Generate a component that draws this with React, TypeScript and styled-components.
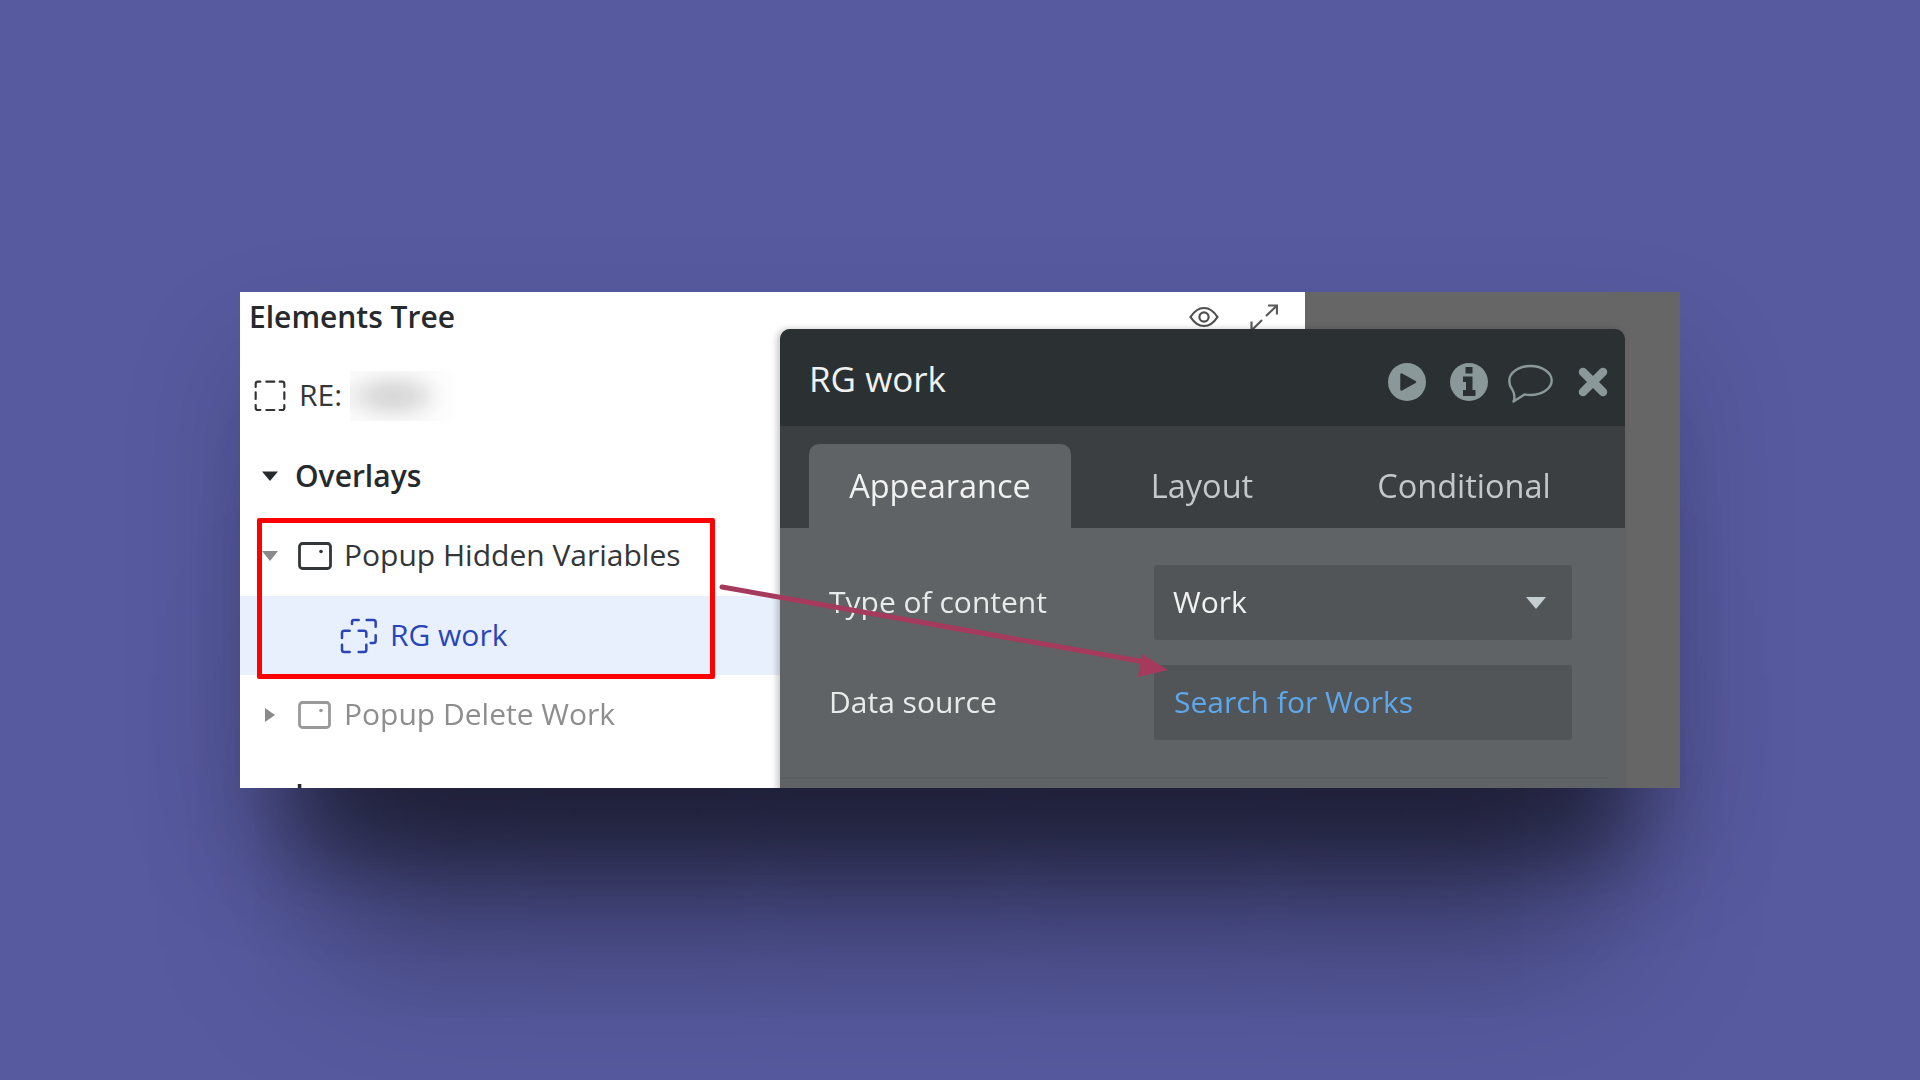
import React from "react";
import styled, { createGlobalStyle } from "styled-components";

const Global = createGlobalStyle`
  html, body { margin: 0; padding: 0; background: #575a9f; }
  body { font-family: "Open Sans", "Noto Sans", sans-serif; }
`;

const Page = styled.div`
  width: 1920px;
  height: 1080px;
  background: #575a9f;
  padding: 292px 0 0 240px;
  box-sizing: border-box;
  overflow: hidden;
`;

const Card = styled.div`
  position: relative;
  width: 1440px;
  height: 496px;
  display: flex;
  overflow: hidden;
  background: #666666;
`;

const ShadowFrame = styled.div`
  width: 1440px;
  height: 496px;
  box-shadow: 0 125px 80px -55px rgba(0, 0, 0, 0.38), 0 245px 160px -85px rgba(0, 0, 0, 0.34),
    0 60px 110px 0 rgba(0, 0, 0, 0.18);
`;

const Surface = styled.div`
  display: flex;
  width: 100%;
  height: 100%;
  filter: blur(0.55px);
`;

const TreePanel = styled.div`
  width: 1065px;
  flex: none;
  background: #ffffff;
  display: flex;
  flex-direction: column;
  color: #2a2a2a;
`;

const TitleRow = styled.div`
  height: 50px;
  flex: none;
  display: flex;
  align-items: center;
  padding: 0 27px 0 9px;
  margin-bottom: 14px;
`;

const Title = styled.div`
  font-size: 30px;
  font-weight: 600;
  color: #262a2c;
  flex: 1;
  margin-top: -2px;
`;

const Eye = styled.svg`
  width: 30px;
  height: 22px;
  margin-right: 31px;
  flex: none;
`;

const Expand = styled.svg`
  width: 28px;
  height: 28px;
  margin-top: 2px;
  flex: none;
`;

const Row = styled.div<{ $selected?: boolean; $h?: number; $gray?: boolean; $pad?: number }>`
  height: ${(p) => p.$h ?? 80}px;
  flex: none;
  display: flex;
  align-items: center;
  padding-left: ${(p) => p.$pad ?? 20}px;
  background: ${(p) => (p.$selected ? "#e8f0fd" : "transparent")};
  color: ${(p) => (p.$selected ? "#2a45b8" : p.$gray ? "#8e8e8e" : "#333638")};
  font-size: 30px;
  white-space: nowrap;
`;

const Arrow = styled.svg`
  width: 20px;
  height: 20px;
  flex: none;
`;

const SectionLabel = styled.span`
  font-weight: 600;
  margin: -2px 0 0 15px;
  font-size: 30px;
  color: #262a2c;
`;

const Label = styled.span`
  margin: -3px 0 0 12px;
`;

const BoxIcon = styled.svg`
  width: 34px;
  height: 28px;
  margin-left: 18px;
  flex: none;
`;

const DashIcon = styled.svg`
  width: 34px;
  height: 34px;
  flex: none;
`;

const GroupIcon = styled.svg`
  width: 38px;
  height: 36px;
  flex: none;
  margin-left: 80px;
`;

const Redacted = styled.div`
  width: 108px;
  height: 50px;
  margin-left: 8px;
  background: radial-gradient(ellipse 56px 28px at 40% 50%, #d8d8d8 0%, #dedede 35%, #efefef 70%, #f9f9f9 100%);
  -webkit-mask-image: linear-gradient(to right, #000 70%, transparent 100%);
  mask-image: linear-gradient(to right, #000 70%, transparent 100%);
`;

const Popup = styled.div`
  position: absolute;
  left: 540px;
  top: 37px;
  width: 845px;
  height: 500px;
  border-radius: 10px 10px 0 0;
  overflow: hidden;
  box-shadow: -3px 0 6px rgba(0, 0, 0, 0.22);
  display: flex;
  flex-direction: column;
  background: #5f6366;
  filter: blur(0.5px);
`;

const PopupHeader = styled.div`
  height: 97px;
  box-sizing: border-box;
  padding: 8px 16px 0 30px;
  flex: none;
  background: #2b3133;
  display: flex;
  align-items: center;
`;

const PopupTitle = styled.div`
  font-size: 35px;
  color: #f0f1f1;
  flex: 1;
  margin: -6px 0 0 -1px;
`;

const HeadIcon = styled.svg<{ $w: number; $x: number; $h?: number }>`
  width: ${(p) => p.$w}px;
  height: ${(p) => p.$h ?? 40}px;
  margin-left: ${(p) => p.$x}px;
  flex: none;
`;

const TabBar = styled.div`
  height: 102px;
  flex: none;
  background: #3b3f42;
  display: flex;
  align-items: flex-end;
  padding-left: 29px;
`;

const Tab = styled.div<{ $active?: boolean }>`
  width: 262px;
  height: 84px;
  box-sizing: border-box;
  padding-bottom: 2px;
  display: flex;
  align-items: center;
  justify-content: center;
  font-size: 32.5px;
  border-radius: 10px 10px 0 0;
  background: ${(p) => (p.$active ? "#5f6366" : "transparent")};
  color: ${(p) => (p.$active ? "#f0f1f1" : "#c4c8ca")};
`;

const Body = styled.div`
  flex: 1;
  padding: 37px 53px 0 49px;
  display: flex;
  flex-direction: column;
  gap: 25px;
  position: relative;
`;

const Field = styled.div`
  display: flex;
  align-items: center;
  height: 75px;
`;

const FieldLabel = styled.div`
  width: 325px;
  font-size: 30px;
  color: #e9eaea;
  flex: none;
  margin-top: -2px;
`;

const Input = styled.div<{ $link?: boolean }>`
  flex: 1;
  height: 75px;
  background: #515557;
  border-radius: 3px;
  display: flex;
  align-items: center;
  justify-content: space-between;
  padding: 0 26px 0 ${(p) => (p.$link ? 20 : 19)}px;
  font-size: 30px;
  color: ${(p) => (p.$link ? "#5da8ec" : "#f0f1f1")};
`;

const InputText = styled.span`
  margin-top: -2px;
`;

const Caret = styled.svg`
  width: 20px;
  height: 12px;
  flex: none;
`;

const Divider = styled.div`
  height: 2px;
  background: #5a5e61;
  margin: 12px -36px 0 -49px;
`;

const RedFrame = styled.div`
  position: absolute;
  left: 17px;
  top: 226px;
  width: 458px;
  height: 161px;
  box-sizing: border-box;
  border: 5px solid #ff0000;
  border-radius: 2px;
`;

const ArrowLayer = styled.svg`
  position: absolute;
  left: 0;
  top: 0;
  width: 1440px;
  height: 496px;
  filter: blur(0.4px);
`;

export default function App() {
  return (
    <Page>
      <Global />
      <ShadowFrame>
        <Card>
          <Surface>
            <TreePanel>
              <TitleRow>
                <Title>Elements Tree</Title>
                <Eye viewBox="0 0 30 22" fill="none" stroke="#4e4e4e" strokeWidth="2.200">
                  <path d="M1.500 11C6 4 10 2 15 2s9 2 13.500 9C24 18 20 20 15 20S6 18 1.500 11Z" />
                  <circle cx="15" cy="11" r="4.600" />
                </Eye>
                <Expand viewBox="0 0 28 28" fill="none" stroke="#5a5a5a" strokeWidth="2.200">
                  <path d="M16 12 27 1.500M18 1.500h9v9" />
                  <path d="M12 16 1.500 26.500M1.500 17.500v9h9" />
                </Expand>
              </TitleRow>
              <Row $pad={13}>
                <DashIcon viewBox="8 12 102 102" fill="none" stroke="#333" strokeWidth="6.500" strokeLinecap="round">
                  <path d="M16 36V27q0-7 7-7h7M48 20h24M88 20h7q7 0 7 7v9M16 52v20M102 52v20M16 90v8q0 7 7 7h7M48 105h24M88 105h7q7 0 7-7v-8" />
                </DashIcon>
                <Label>RE:</Label>
                <Redacted />
              </Row>
              <Row>
                <Arrow viewBox="0 0 20 20" fill="#262a2c">
                  <path d="M2 5.500h16L10 15Z" />
                </Arrow>
                <SectionLabel>Overlays</SectionLabel>
              </Row>
              <Row>
                <Arrow viewBox="0 0 20 20" fill="#8a8a8a">
                  <path d="M2 5h16L10 15Z" />
                </Arrow>
                <BoxIcon viewBox="0 0 34 28" fill="none" stroke="#333638" strokeWidth="2.800">
                  <rect x="1.500" y="1.500" width="31" height="25" rx="3" />
                  <circle cx="23" cy="9.500" r="1.800" fill="#333638" stroke="none" />
                </BoxIcon>
                <Label>Popup Hidden Variables</Label>
              </Row>
              <Row $selected $h={79}>
                <GroupIcon viewBox="16 20 114 108" fill="none" stroke="#2a45b8" strokeWidth="7.500" strokeLinecap="round">
                  <path d="M52 38V32q0-6 6-6h14M96 26h20q7 0 7 7v13M123 72v16q0 7-7 7h-8" />
                  <path d="M22 80V65q0-7 7-7h16M72 58h16q7 0 7 7v11M22 100v15q0 7 7 7h16M72 122h16q7 0 7-7v-15" />
                </GroupIcon>
                <Label>RG work</Label>
              </Row>
              <Row $gray>
                <Arrow viewBox="0 0 20 20" fill="#8a8a8a">
                  <path d="M5 3l10 7-10 7Z" />
                </Arrow>
                <BoxIcon viewBox="0 0 34 28" fill="none" stroke="#999" strokeWidth="2.800">
                  <rect x="1.500" y="1.500" width="30" height="25" rx="3" />
                  <circle cx="23" cy="9.500" r="1.800" fill="#999" stroke="none" />
                </BoxIcon>
                <Label>Popup Delete Work</Label>
              </Row>
              <Row>
                <Arrow viewBox="0 0 20 20" />
                <SectionLabel>Layers</SectionLabel>
              </Row>
            </TreePanel>
          </Surface>
          <Popup>
            <PopupHeader>
              <PopupTitle>RG work</PopupTitle>
              <HeadIcon $w={38} $x={0} viewBox="0 0 38 40">
                <circle cx="19" cy="20" r="19" fill="#8a9899" />
                <path d="M13.500 12.500v15L27 20Z" fill="#2b3133" stroke="#2b3133" strokeWidth="2.500" strokeLinejoin="round" />
              </HeadIcon>
              <HeadIcon $w={38} $x={24} viewBox="0 0 38 40">
                <circle cx="19" cy="20" r="19" fill="#8a9899" />
                <path d="M15.500 5h7v6.500h-7ZM13 14.500h9.500V28H25.500v6H13v-6h3v-8h-3Z" fill="#2b3133" />
              </HeadIcon>
              <HeadIcon $w={45} $x={20} $h={42} viewBox="0 0 45 42" fill="none" stroke="#8a9899" strokeWidth="2.400">
                <path d="M4 28C2 25.500 1.300 22.500 1.300 19.500 1.300 11.500 11 5 22.500 5S43.700 11.500 43.700 19.500 34 34 22.500 34c-2 0-4-.2-6-.6L5.500 40.500C7 37 7 33 4 28Z" strokeLinejoin="round" />
              </HeadIcon>
              <HeadIcon $w={32} $x={24} viewBox="0 0 32 40">
                <path d="M6 10 26 30M26 10 6 30" stroke="#8a9899" strokeWidth="8.500" strokeLinecap="round" />
              </HeadIcon>
            </PopupHeader>
            <TabBar>
              <Tab $active>Appearance</Tab>
              <Tab>Layout</Tab>
              <Tab>Conditional</Tab>
            </TabBar>
            <Body>
              <Field>
                <FieldLabel>Type of content</FieldLabel>
                <Input>
                  <InputText>Work</InputText>
                  <Caret viewBox="0 0 20 12" fill="#c5ced3">
                    <path d="M0 0h20L10 12Z" />
                  </Caret>
                </Input>
              </Field>
              <Field>
                <FieldLabel>Data source</FieldLabel>
                <Input $link>
                  <InputText>Search for Works</InputText>
                </Input>
              </Field>
              <Divider />
            </Body>
          </Popup>
          <RedFrame />
          <ArrowLayer viewBox="0 0 1440 496">
            <path d="M482 295 905 370" stroke="#a63a5c" strokeWidth="5" strokeLinecap="round" />
            <path d="M902 362 928 378 898 385Z" fill="#a63a5c" />
          </ArrowLayer>
        </Card>
      </ShadowFrame>
    </Page>
  );
}
